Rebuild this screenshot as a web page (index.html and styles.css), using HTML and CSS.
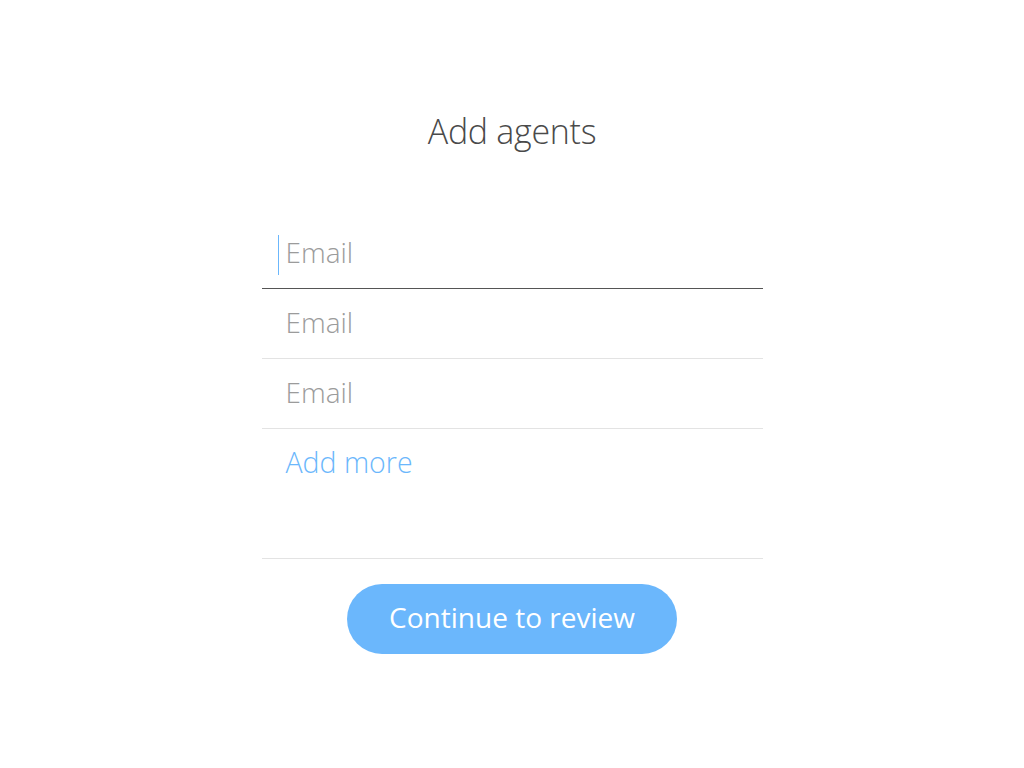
FILE: index.html
```html
<!DOCTYPE html>
<html>
<head>
<meta charset="utf-8">
<link rel="stylesheet" href="styles.css">
</head>
<body>
<main class="page">
  <h1 class="title">Add agents</h1>
  <div class="form">
    <div class="row row-active"><span class="caret"></span><span class="placeholder">Email</span></div>
    <div class="row"><span class="placeholder">Email</span></div>
    <div class="row"><span class="placeholder">Email</span></div>
    <div class="row row-more"><span class="add-more">Add more</span></div>
  </div>
  <button class="cta">Continue to review</button>
</main>
</body>
</html>
```
FILE: styles.css
```css
html, body {
  margin: 0;
  padding: 0;
  background: #fff;
}
body {
  font-family: "Open Sans", "Liberation Sans", sans-serif;
}
.page {
  display: flex;
  flex-direction: column;
  align-items: center;
  padding-top: 108px;
}
.title {
  margin: 0;
  font-weight: 300;
  font-size: 34px;
  line-height: 46px;
  color: #4a4a4a;
  letter-spacing: -0.3px;
}
.form {
  width: 501px;
  margin-top: 65px;
  display: flex;
  flex-direction: column;
}
.row {
  height: 70px;
  box-sizing: border-box;
  border-bottom: 1px solid #e3e3e3;
  display: flex;
  align-items: center;
  padding-left: 24px;
  padding-bottom: 4px;
  position: relative;
}
.row-active {
  border-bottom-color: #555;
}
.caret {
  position: absolute;
  left: 16px;
  top: 16px;
  width: 1px;
  height: 40px;
  background: #6bb7fc;
}
.placeholder {
  font-size: 28px;
  font-weight: 300;
  color: #9b9b9b;
}
.row-more {
  height: 130px;
  align-items: flex-start;
  padding-top: 12px;
  padding-bottom: 0;
}
.add-more {
  font-size: 28.5px;
  font-weight: 300;
  color: #6bb7fc;
  line-height: 42px;
}
.cta {
  margin-top: 25px;
  width: 330px;
  height: 70px;
  border: none;
  border-radius: 35px;
  background: #6bb7fc;
  color: #fff;
  font-family: "Open Sans", "Liberation Sans", sans-serif;
  font-size: 28px;
  line-height: 64px;
  font-weight: 400;
  padding: 0 0 4px;
}
```
